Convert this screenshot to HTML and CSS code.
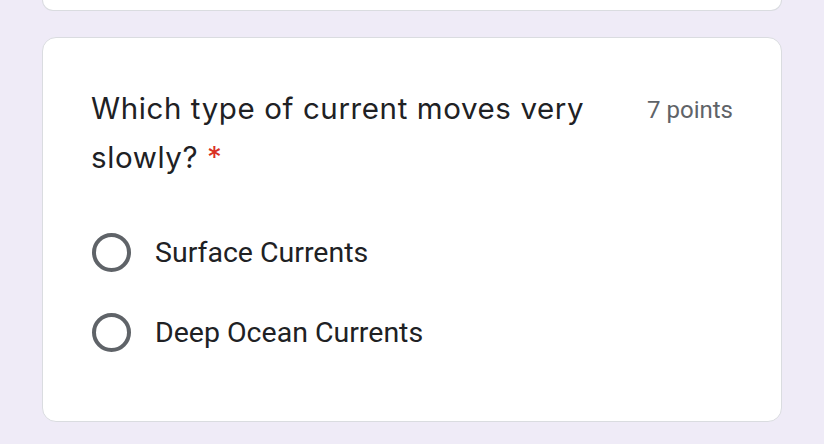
FILE: index.html
```html
<!DOCTYPE html>
<html>
<head>
<meta charset="utf-8">
<link rel="stylesheet" href="styles.css">
</head>
<body>
<div class="page">
  <div class="card card-prev"></div>
  <div class="card card-question">
    <div class="title-row">
      <div class="question">Which type of current moves very slowly?&nbsp;<span class="req">*</span></div>
      <div class="points">7 points</div>
    </div>
    <div class="options">
      <label class="option"><span class="radio"></span><span class="opt-text">Surface Currents</span></label>
      <label class="option"><span class="radio"></span><span class="opt-text">Deep Ocean Currents</span></label>
    </div>
  </div>
</div>
</body>
</html>
```
FILE: styles.css
```css
html, body {
  margin: 0;
  padding: 0;
  background: #efebf7;
}
.page {
  padding: 0 42px;
  display: flex;
  flex-direction: column;
  gap: 26px;
}
.card {
  background: #fff;
  border: 1.5px solid #dadce0;
  border-radius: 14px;
  box-sizing: border-box;
}
.card-prev {
  height: 11px;
  border-top: none;
  border-radius: 0 0 14px 14px;
}
.card-question {
  height: 385px;
  padding: 46px 48px 0 48px;
}
.title-row {
  display: flex;
  justify-content: space-between;
  align-items: flex-start;
}
.question {
  width: 530px;
  font-family: Inter, sans-serif;
  font-size: 29.5px;
  letter-spacing: 0.6px;
  line-height: 49px;
  color: #202124;
}
.req {
  color: #d93025;
  letter-spacing: 0;
}
.points {
  font-family: Roboto, sans-serif;
  font-size: 24px;
  color: #5f6368;
  padding-top: 12px;
}
.options {
  margin-top: 50px;
  display: flex;
  flex-direction: column;
  gap: 40px;
}
.option {
  display: flex;
  align-items: center;
  gap: 24px;
  height: 40px;
}
.radio {
  width: 39px;
  height: 39px;
  border: 4px solid #5f6368;
  border-radius: 50%;
  box-sizing: border-box;
  margin-left: 1px;
}
.opt-text {
  font-family: Roboto, sans-serif;
  font-size: 28.5px;
  color: #202124;
}
```
